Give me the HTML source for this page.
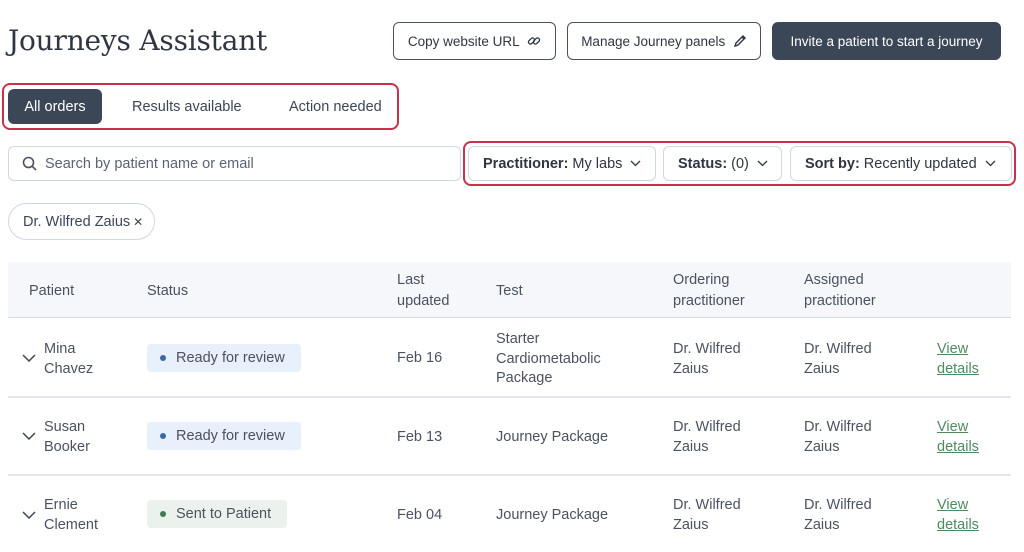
<!DOCTYPE html>
<html><head><style>
*{box-sizing:border-box;margin:0;padding:0}
body{width:1024px;height:552px;background:#fff;font-family:"Liberation Sans",sans-serif;color:#3d4656;position:relative;overflow:hidden;font-size:14.5px}
.a{position:absolute;white-space:nowrap}
h1{position:absolute;left:8px;top:24px;font-family:"DejaVu Serif",serif;font-weight:400;font-size:28px;color:#2f3642;letter-spacing:-0.2px}
.btn{position:absolute;top:22px;height:38px;border:1px solid #4a5260;border-radius:6px;display:flex;align-items:center;justify-content:center;font-size:13.5px;color:#2f3642}
.red{position:absolute;border:2px solid #c8324b;border-radius:8px}
.dd{position:absolute;top:146px;height:35px;border:1px solid #cfd7e3;border-radius:6px;display:flex;align-items:center;padding-left:14px;font-size:14.5px;color:#2f3642}
.dd b{font-weight:700;margin-right:4px}
.hd{position:absolute;top:262px;left:8px;width:1003px;height:56px;background:#f5f7fa;border-bottom:1px solid #cfd9e6}
.th{position:absolute;line-height:21px;color:#4a5260}
.ln{position:absolute;left:8px;width:1003px;height:2px;background:#e3e6ea}
.c{position:absolute;line-height:19.5px;color:#4a5260}
.pill{position:absolute;height:28px;border-radius:4px;display:flex;align-items:center;padding-left:13px;color:#4a5260}
.pill i{display:inline-block;width:6px;height:6px;border-radius:50%;margin-right:10px}
.lk{position:absolute;left:937px;line-height:20px;color:#4d8a5f;text-decoration:underline}
.chev{position:absolute;left:22px;width:14px;height:8px}
</style></head><body>
<h1>Journeys Assistant</h1>
<div class="btn" style="left:393px;width:163px">Copy website URL&nbsp;&nbsp;<svg width="14" height="14" viewBox="0 0 14 14" fill="none" stroke="#2f3642" stroke-width="1.3"><rect x="1" y="5" width="7" height="4" rx="2" transform="rotate(-45 4.5 7)"/><rect x="6" y="5" width="7" height="4" rx="2" transform="rotate(-45 9.5 7)"/></svg></div>
<div class="btn" style="left:567px;width:194px">Manage Journey panels&nbsp;&nbsp;<svg width="14" height="14" viewBox="0 0 14 14" fill="none" stroke="#2f3642" stroke-width="1.4"><path d="M2 12l1-3 7-7 2 2-7 7z M9 3l2 2"/></svg></div>
<div class="btn" style="left:772px;width:229px;background:#3b4757;border-color:#3b4757;color:#fff">Invite a patient to start a journey</div>
<div class="red" style="left:2px;top:83px;width:397px;height:47px"></div>
<div class="a" style="left:8px;top:89px;width:94px;height:35px;background:#3b4757;border-radius:6px;color:#fff;display:flex;align-items:center;justify-content:center">All orders</div>
<div class="a" style="left:132px;top:99px">Results available</div>
<div class="a" style="left:289px;top:99px">Action needed</div>
<div class="a" style="left:8px;top:146px;width:453px;height:35px;border:1px solid #cfd7e3;border-radius:6px"></div>
<svg class="a" style="left:22px;top:156px" width="16" height="16" viewBox="0 0 16 16" fill="none" stroke="#4a5260" stroke-width="1.6"><circle cx="6.5" cy="6.5" r="5"/><path d="M10.3 10.3L14 14"/></svg>
<div class="a" style="left:45px;top:156px;color:#5a6272">Search by patient name or email</div>
<div class="red" style="left:463px;top:141px;width:553px;height:45px"></div>
<div class="dd" style="left:468px;width:188px"><b>Practitioner:</b>My labs&nbsp;&nbsp;<svg width="11" height="7" viewBox="0 0 11 7" fill="none" stroke="#2f3642" stroke-width="1.3"><path d="M1 1l4.5 4.5L10 1"/></svg></div>
<div class="dd" style="left:663px;width:119px"><b>Status:</b>(0)&nbsp;&nbsp;<svg width="11" height="7" viewBox="0 0 11 7" fill="none" stroke="#2f3642" stroke-width="1.3"><path d="M1 1l4.5 4.5L10 1"/></svg></div>
<div class="dd" style="left:790px;width:222px"><b>Sort by:</b>Recently updated&nbsp;&nbsp;<svg width="11" height="7" viewBox="0 0 11 7" fill="none" stroke="#2f3642" stroke-width="1.3"><path d="M1 1l4.5 4.5L10 1"/></svg></div>
<div class="a" style="left:8px;top:203px;width:147px;height:37px;border:1px solid #cfd7e3;border-radius:19px;display:flex;align-items:center;padding-left:14px;color:#3d4656">Dr. Wilfred Zaius <span style="font-size:12px;margin-left:3px">✕</span></div>
<div class="hd"></div>
<div class="th" style="left:29px;top:281px">Patient</div>
<div class="th" style="left:147px;top:281px">Status</div>
<div class="th" style="left:397px;top:270px">Last<br>updated</div>
<div class="th" style="left:496px;top:281px">Test</div>
<div class="th" style="left:673px;top:270px">Ordering<br>practitioner</div>
<div class="th" style="left:804px;top:270px">Assigned<br>practitioner</div>
<div class="ln" style="top:396px"></div>
<div class="ln" style="top:474px"></div>

<svg class="chev" style="top:354px" viewBox="0 0 14 8" fill="none" stroke="#3d4656" stroke-width="1.5"><path d="M1 1l6 6 6-6"/></svg>
<div class="c" style="left:44px;top:340px">Mina<br>Chavez</div>
<div class="pill" style="left:147px;top:344px;width:154px;background:#e8f0fb"><i style="background:#3b66a8"></i>Ready for review</div>
<div class="c" style="left:397px;top:349px">Feb 16</div>
<div class="c" style="left:496px;top:330px">Starter<br>Cardiometabolic<br>Package</div>
<div class="c" style="left:673px;top:340px">Dr. Wilfred<br>Zaius</div>
<div class="c" style="left:804px;top:340px">Dr. Wilfred<br>Zaius</div>
<div class="lk" style="top:339px">View<br>details</div>

<svg class="chev" style="top:432px" viewBox="0 0 14 8" fill="none" stroke="#3d4656" stroke-width="1.5"><path d="M1 1l6 6 6-6"/></svg>
<div class="c" style="left:44px;top:418px">Susan<br>Booker</div>
<div class="pill" style="left:147px;top:422px;width:154px;background:#e8f0fb"><i style="background:#3b66a8"></i>Ready for review</div>
<div class="c" style="left:397px;top:428px">Feb 13</div>
<div class="c" style="left:496px;top:428px">Journey Package</div>
<div class="c" style="left:673px;top:418px">Dr. Wilfred<br>Zaius</div>
<div class="c" style="left:804px;top:418px">Dr. Wilfred<br>Zaius</div>
<div class="lk" style="top:417px">View<br>details</div>

<svg class="chev" style="top:511px" viewBox="0 0 14 8" fill="none" stroke="#3d4656" stroke-width="1.5"><path d="M1 1l6 6 6-6"/></svg>
<div class="c" style="left:44px;top:496px">Ernie<br>Clement</div>
<div class="pill" style="left:147px;top:500px;width:140px;background:#ebf2ee"><i style="background:#3d7a4f"></i>Sent to Patient</div>
<div class="c" style="left:397px;top:506px">Feb 04</div>
<div class="c" style="left:496px;top:506px">Journey Package</div>
<div class="c" style="left:673px;top:496px">Dr. Wilfred<br>Zaius</div>
<div class="c" style="left:804px;top:496px">Dr. Wilfred<br>Zaius</div>
<div class="lk" style="top:495px">View<br>details</div>
</body></html>
